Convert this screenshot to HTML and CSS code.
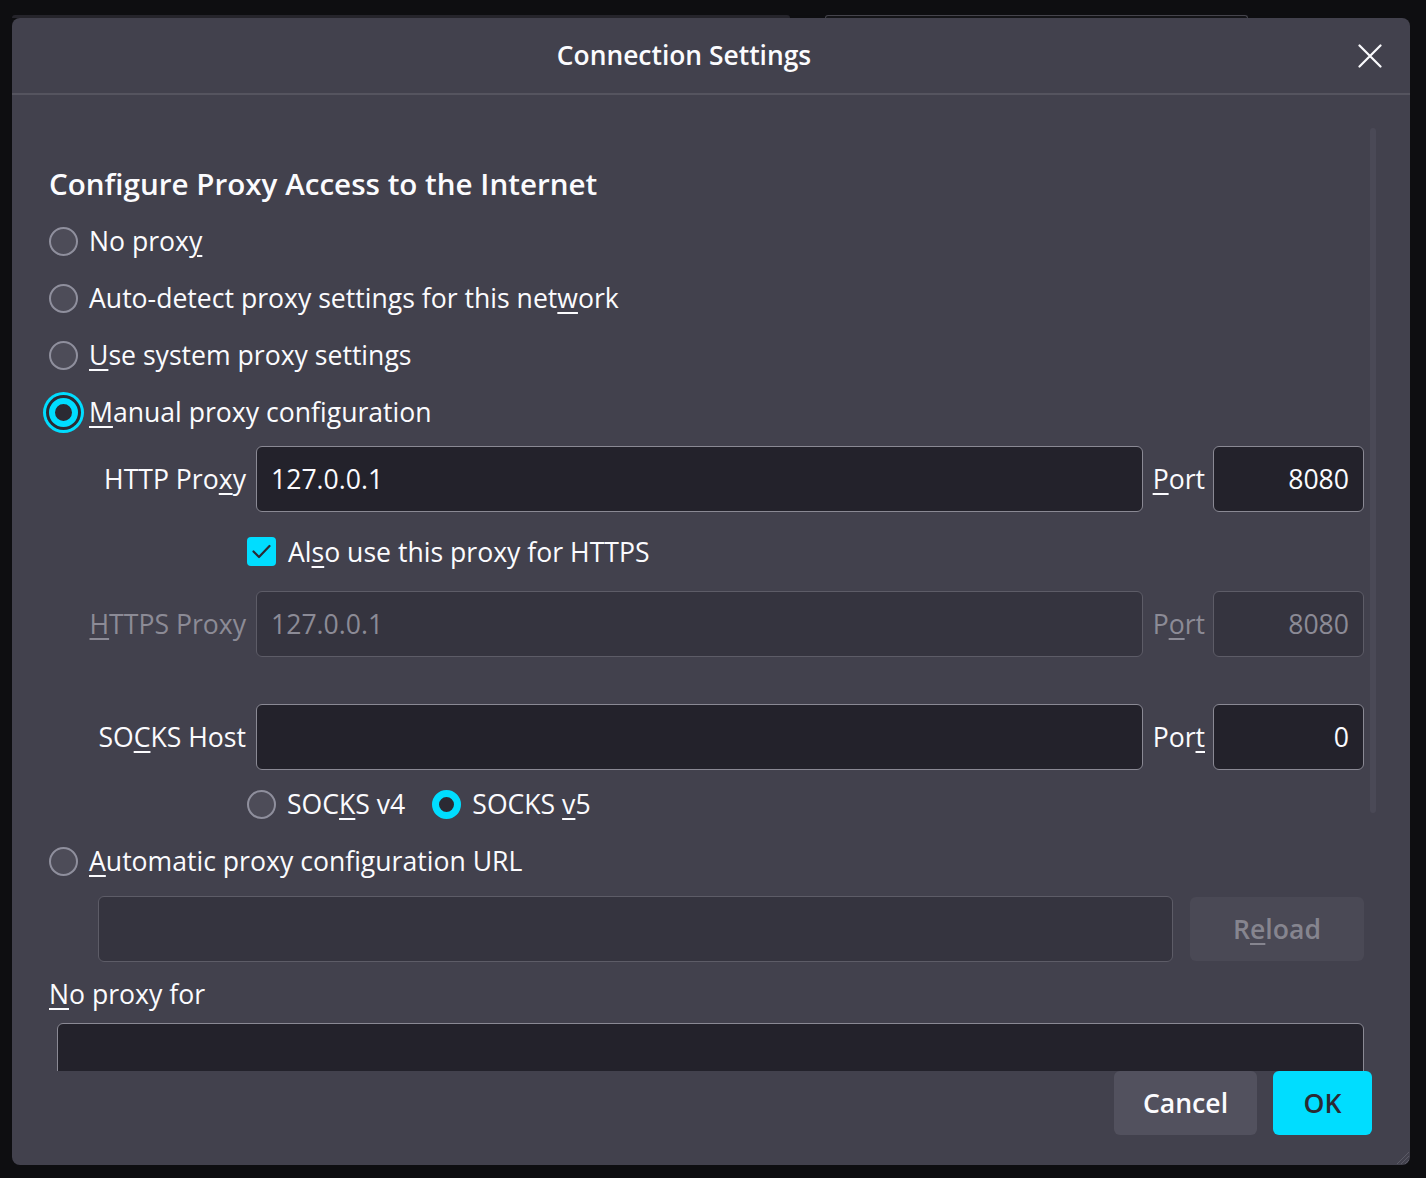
FILE: index.html
```html
<!DOCTYPE html>
<html lang="en">
<head>
<meta charset="utf-8">
<title>Connection Settings</title>
<link rel="stylesheet" href="styles.css">
</head>
<body>
<div class="backdrop">
  <div class="bgtab bgtab-a"></div>
  <div class="bgtab bgtab-b"></div>
</div>
<div class="dialog">
  <header class="dlg-header">
    <div class="dlg-title">Connection Settings</div>
    <button class="close-btn" aria-label="Close">
      <svg width="24" height="24" viewBox="0 0 24 24"><path d="M1.5 1.5 L22.5 22.5 M22.5 1.5 L1.5 22.5" stroke="#fbfbfe" stroke-width="2.2" fill="none" stroke-linecap="round"/></svg>
    </button>
  </header>
  <div class="dlg-content">
    <div class="scrollthumb"></div>
    <h2 class="section-title">Configure Proxy Access to the Internet</h2>
    <label class="radio-row"><span class="radio"></span><span>No prox<u>y</u></span></label>
    <label class="radio-row"><span class="radio"></span><span>Auto-detect proxy settings for this net<u>w</u>ork</span></label>
    <label class="radio-row"><span class="radio"></span><span><u>U</u>se system proxy settings</span></label>
    <label class="radio-row"><span class="radio checked focused"></span><span><u>M</u>anual proxy configuration</span></label>

    <div class="proxy-grid">
      <span class="lbl">HTTP Pro<u>x</u>y</span>
      <div class="field"><span class="val">127.0.0.1</span></div>
      <span class="lbl port-lbl"><u>P</u>ort</span>
      <div class="field num"><span class="val">8080</span></div>

      <label class="check-row"><span class="checkbox"><svg width="29" height="29" viewBox="0 0 29 29"><path d="M6.5 14.5 L12 20 L22.5 9" stroke="#2b2a33" stroke-width="2.2" fill="none" stroke-linecap="round" stroke-linejoin="round"/></svg></span><span>Al<u>s</u>o use this proxy for HTTPS</span></label>

      <span class="lbl disabled"><u>H</u>TTPS Proxy</span>
      <div class="field disabled"><span class="val">127.0.0.1</span></div>
      <span class="lbl port-lbl disabled">P<u>o</u>rt</span>
      <div class="field num disabled"><span class="val">8080</span></div>

      <span class="lbl socks">SO<u>C</u>KS Host</span>
      <div class="field socks"></div>
      <span class="lbl port-lbl socks">Por<u>t</u></span>
      <div class="field num socks"><span class="val">0</span></div>

      <div class="socks-row">
        <label class="inline-radio"><span class="radio"></span><span>SOC<u>K</u>S v4</span></label>
        <label class="inline-radio"><span class="radio checked"></span><span>SOCKS <u>v</u>5</span></label>
      </div>
    </div>

    <label class="radio-row"><span class="radio"></span><span><u>A</u>utomatic proxy configuration URL</span></label>
    <div class="url-row">
      <div class="field disabled grow"></div>
      <button class="btn reload">R<u>e</u>load</button>
    </div>
    <div class="noproxy-lbl"><u>N</u>o proxy for</div>
    <div class="field noproxy"></div>
  </div>
  <footer class="dlg-footer">
    <button class="btn cancel">Cancel</button>
    <button class="btn ok">OK</button>
  </footer>
  <svg class="grip" width="16" height="16" viewBox="0 0 16 16"><path d="M15 3 L3 15 M15 7 L7 15 M15 11 L11 15" stroke="#5b5a66" stroke-width="1" fill="none"/></svg>
</div>
</body>
</html>
```
FILE: styles.css
```css
* { box-sizing: border-box; }
html, body { margin: 0; padding: 0; }
body {
  background: #0e0e11;
  font-family: "Open Sans", "Noto Sans", sans-serif;
  color: #fbfbfe;
  width: 1426px;
  height: 1178px;
  overflow: hidden;
}
.backdrop {
  height: 18px;
  display: flex;
  align-items: flex-end;
  padding-left: 12px;
  gap: 35px;
}
.bgtab { height: 3px; border-radius: 3px 3px 0 0; }
.bgtab-a { width: 778px; background: #25242b; }
.bgtab-b { width: 423px; border: 1px solid #45444c; border-bottom: none; background: #141418; }
.dialog {
  position: relative;
  margin-left: 12px;
  width: 1398px;
  height: 1147px;
  background: #42414d;
  border-radius: 8px;
  display: flex;
  flex-direction: column;
  overflow: hidden;
}
.dlg-header {
  height: 77px;
  flex: none;
  display: flex;
  align-items: center;
  border-bottom: 2px solid #55545f;
}
.dlg-title {
  flex: 1;
  text-align: center;
  font-size: 26.4px;
  font-weight: 600;
  padding-left: 6px;
  padding-bottom: 2px;
}
.close-btn {
  width: 40px;
  height: 40px;
  margin-right: 20px;
  background: none;
  border: 0;
  padding: 0;
  display: flex;
  align-items: center;
  justify-content: center;
}
.dlg-content {
  position: relative;
  flex: 1;
  overflow: hidden;
  padding: 69px 46px 0 37px;
  font-size: 26.6px;
}
.scrollthumb {
  position: absolute;
  left: 1358px;
  top: 33px;
  width: 6px;
  height: 685px;
  border-radius: 3px;
  background: #4a4956;
}
u { text-decoration: underline; text-underline-offset: 4px; text-decoration-thickness: 2px; }
.section-title {
  margin: 0 0 9px;
  font-size: 29.6px;
  font-weight: 600;
  line-height: 40px;
}
.radio-row {
  height: 57px;
  display: flex;
  align-items: center;
  gap: 11px;
  padding-bottom: 2px;
}
.radio-row .radio { margin-top: 2px; }
.radio {
  flex: none;
  width: 29px;
  height: 29px;
  border-radius: 50%;
  border: 2px solid #8f8f9d;
  background: #4d4c58;
}
.radio.checked {
  border: 7.5px solid #00ddff;
  background: #2b2a33;
}
.radio.focused {
  border-width: 6px;
  box-shadow: 0 0 0 3px #2b2a33, 0 0 0 6px #00ddff;
}
.proxy-grid {
  margin-top: 5px;
  display: grid;
  grid-template-columns: 197px 1fr auto 151px;
  grid-template-rows: 66px 79px 66px 113px 63px;
  column-gap: 10px;
  align-items: center;
}
.lbl { text-align: right; white-space: nowrap; }
.port-lbl { text-align: left; margin-right: -2px; }
.lbl.disabled { color: #8c8b96; }
.field {
  height: 66px;
  border: 1px solid #8a8994;
  border-radius: 6px;
  background: #23222b;
  display: flex;
  align-items: center;
  padding: 0 14px;
}
.field.num { justify-content: flex-end; }
.field.disabled {
  background: #35343f;
  border-color: #5d5c67;
  color: #8c8b96;
}
.field.socks { grid-row: 4; align-self: end; }
.lbl.socks {
  grid-row: 4;
  align-self: end;
  height: 66px;
  display: flex;
  align-items: center;
  justify-content: flex-end;
}
.lbl.port-lbl.socks { justify-content: flex-start; }
.check-row {
  grid-column: 2 / span 3;
  margin-left: -9px;
  display: flex;
  align-items: center;
  gap: 12px;
}
.checkbox {
  width: 29px;
  height: 29px;
  border-radius: 4px;
  background: #00ddff;
  display: flex;
}
.socks-row {
  grid-column: 2 / span 3;
  margin-left: -9px;
  padding-top: 5px;
  display: flex;
  align-items: center;
  gap: 27px;
}
.inline-radio { display: flex; align-items: center; gap: 11px; }
.url-row {
  margin-top: 6px;
  margin-left: 49px;
  display: flex;
  gap: 17px;
  align-items: center;
}
.grow { flex: 1; }
.btn {
  font-family: inherit;
  font-size: 26.6px;
  font-weight: 600;
  border: 0;
  border-radius: 6px;
  height: 64px;
  padding: 0;
}
.reload {
  width: 174px;
  background: #4a4955;
  color: #86858f;
}
.noproxy-lbl {
  margin-top: 15px;
  line-height: 34px;
}
.noproxy {
  margin-top: 12px;
  margin-left: 8px;
}
.dlg-footer {
  flex: none;
  height: 94px;
  display: flex;
  justify-content: flex-end;
  align-items: flex-start;
  gap: 16px;
  padding-right: 38px;
}
.cancel { width: 143px; background: #52515e; color: #fbfbfe; }
.ok { width: 99px; background: #00ddff; color: #2b2a33; }
.grip { position: absolute; right: 0; bottom: 0; }
```
